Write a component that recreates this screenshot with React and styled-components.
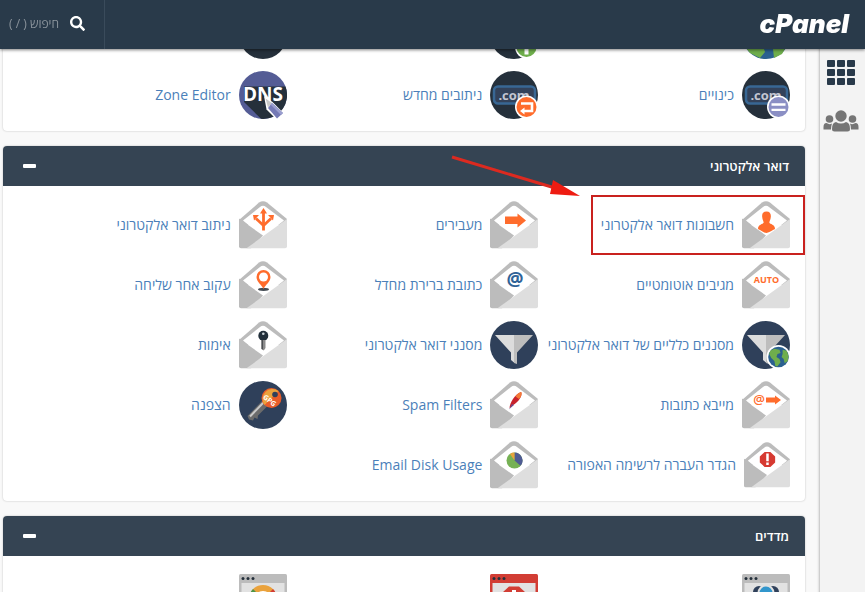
import React from 'react';
import styled, { createGlobalStyle, css } from 'styled-components';
import { FaSearch } from 'react-icons/fa';

const ORANGE = '#ff6c2c';
const NAVY = '#293a4a';

/* ---------- icons ---------- */

const Svg = ({ size = 48, children }) => (
    <svg width={size} height={size} viewBox="0 0 48 48" aria-hidden="true">{children}</svg>
);

const Envelope = ({ size, children }) => (
    <Svg size={size}>
        <path d="M0 19 L20 1.5 Q24 -1 28 1.5 L48 18 V24 H0 Z" fill="#bcbcbc" />
        <path d="M4 19.500 L21 6 Q24 3.500 27 6 L45 19.500 L24 36 Z" fill="#fff" />
        <path d="M0 17.500 L24 34.500 L12 47.300 H2 Q0 47.300 0 45.300 Z" fill="#bcbcbc" />
        <path d="M48 18 V45.300 Q48 47.300 46 47.300 H7.500 Z" fill="#dedede" />
        {children}
    </Svg>
);

const Globe = ({ cx, cy, r }) => (
    <g transform={`translate(${cx} ${cy}) scale(${r / 10})`}>
        <circle r="10" fill="#2b6090" />
        <path d="M-8 -6 L-4 -8 L1 -7 L2 -4 L-1 -3 L-2 0 L1 2 L2 5 L-1 9 L-3 9 L-4 4 L-7 1 L-9 -3 Z" fill="#6fae4c" />
        <path d="M4 -7 L8 -6 L9.800 -1 L9 4 L6 6 L5 2 L3 0 L4 -3 Z" fill="#6fae4c" />
    </g>
);

const AccountsIcon = () => (
    <Envelope>
        <path fill={ORANGE} d="M24.500 10.500 C28 10.500 29.200 13 28.800 16 C28.500 19 27.500 20 27.300 21.500 C28 23.500 33 23 33 28 C30.500 29 27.500 31.500 24.500 32 C21.500 31.500 18.500 29 16 28 C16 23 21 23.500 21.700 21.500 C21.500 20 20.500 19 20.200 16 C19.800 13 21 10.500 24.500 10.500 Z" />
    </Envelope>
);

const ForwardIcon = () => (
    <Envelope>
        <path fill={ORANGE} d="M15 15.500 H27.500 V12.500 L36 19.500 L27.500 26.500 V23 H15 Z" />
    </Envelope>
);

const RoutingIcon = () => (
    <Envelope>
        <g fill="none" stroke={ORANGE} strokeWidth="2.800">
            <path d="M24.500 29.500 V11" />
            <path d="M24.500 24.500 L17 17.500" />
            <path d="M24.500 24.500 L32 17.500" />
        </g>
        <path fill={ORANGE} d="M24.500 7 L28 12.500 H21 Z M14 14 L20 14 L15 19.500 Z M35 14 L29 14 L34 19.500 Z" />
    </Envelope>
);

const IconText = styled.text`
    font-family: 'Open Sans', sans-serif;
    font-weight: ${({ $weight }) => $weight || 700};
    font-size: ${({ $size }) => $size}px;
    text-anchor: middle;
    direction: ltr;
`;

const AutoIcon = () => (
    <Envelope>
        <IconText $size={9} x="24.500" y="22" fill={ORANGE}>AUTO</IconText>
    </Envelope>
);

const DefaultIcon = () => (
    <Envelope>
        <IconText $size={19} x="25" y="25" fill="#2f6397">@</IconText>
    </Envelope>
);

const TrackIcon = () => (
    <Envelope>
        <ellipse cx="24.500" cy="28.300" rx="5.500" ry="1.600" fill="#444c54" />
        <path fill={ORANGE} d="M24.500 9 A7 7 0 0 1 31.500 16 C31.500 21 26 24 24.500 28 C23 24 17.500 21 17.500 16 A7 7 0 0 1 24.500 9 Z" />
        <circle cx="24.500" cy="16" r="4.500" fill="#fff" />
    </Envelope>
);

const FilterIcon = ({ globe }) => (
    <Svg>
        <circle cx="24" cy="24" r="24" fill="#2f405a" />
        <path d="M5 14 H24.500 V42 L21 39 V31.500 Z" fill="#dcdcdc" />
        <path d="M43 14 H24 V42 L27 43 V31.500 Z" fill="#bdbdbd" />
        {globe && (
            <>
                <circle cx="36.500" cy="36" r="12" fill="#fff" />
                <Globe cx={36.5} cy={36} r={10.3} />
            </>
        )}
    </Svg>
);

const AuthIcon = () => (
    <Envelope>
        <circle cx="24.300" cy="14.800" r="5" fill="#222f3b" />
        <circle cx="24.300" cy="12.700" r="1.300" fill="#c9d2d8" />
        <path d="M22.500 19 H26.500 V27 L24.800 29.500 L22.500 28 Z" fill="#8b8b8b" />
        <path d="M22.500 19 H24 V28.500 L22.500 28 Z" fill="#4c4f52" />
    </Envelope>
);

const ImportIcon = () => (
    <Envelope>
        <IconText $size={13} $weight={600} x="17" y="23" fill={ORANGE}>@</IconText>
        <path fill={ORANGE} d="M24 16.500 H33 V14.500 L39 19 L33 23.500 V21.500 H24 Z" />
    </Envelope>
);

const SpamIcon = () => (
    <Envelope>
        <path d="M19.500 27 C20 22 24 14 31 11 C33 14 29 21 22.500 24.500 Z" fill="#c8232c" />
        <path d="M25.500 15.500 C27 13 29 11.500 31.500 11 C32 13.500 31 16 29 18 Z" fill="#f47b36" />
        <path d="M19 28.500 L22 23 L24 24 L20.500 27 Z" fill="#6b4a8b" />
    </Envelope>
);

const KeyIcon = () => (
    <Svg>
        <circle cx="24" cy="24" r="24" fill="#2f405a" />
        <path d="M24 19 L29 24.500 L19 34.500 L18.500 38 L15.500 36.500 L14 39.500 L10 38.500 L8.500 35 Z" fill="#6b6b6b" />
        <path d="M24.500 21.500 L11 35.500" stroke="#c9c9c9" strokeWidth="2" />
        <circle cx="32.500" cy="17" r="10" fill="#e95c29" />
        <path d="M25.500 24 A10 10 0 0 1 39.500 10 Z" fill="#eaa23c" />
        <circle cx="36" cy="13.500" r="2.800" fill="#2f405a" />
        <IconText $size={7} x="31" y="22" fill="#fff" transform="rotate(38 31 19)">GPG</IconText>
    </Svg>
);

const GreylistIcon = () => (
    <Envelope size={46}>
        <path d="M21.500 10.500 H27.500 L32.500 15 V21.500 L27.500 26 H21.500 L16.500 21.500 V15 Z" fill="#d63a31" />
        <path d="M24.500 12 V20 M24.500 21.500 V24" stroke="#fff" strokeWidth="2.600" />
    </Envelope>
);

const DiskIcon = () => (
    <Envelope>
        <circle cx="24.500" cy="19.500" r="8" fill="#76b154" />
        <path d="M24.500 19.500 V11.500 A8 8 0 0 1 30.500 24.800 Z" fill="#4f5b93" />
        <path d="M24.500 19.500 L20 12.900 A8 8 0 0 1 24.500 11.500 Z" fill="#e8a33d" />
    </Envelope>
);

const DarkDisc = ({ children }) => (
    <Svg>
        <circle cx="24" cy="24" r="24" fill="#25303b" />
        {children}
    </Svg>
);

const ComPlate = () => (
    <>
        <rect x="4" y="15.500" width="41" height="17" rx="4" fill="#33425a" stroke="#386794" strokeWidth="2.500" />
        <IconText $size={13} x="24" y="28.500" fill="#c3c6d2">.com</IconText>
    </>
);

const AliasIcon = () => (
    <DarkDisc>
        <ComPlate />
        <circle cx="36.500" cy="36" r="11.500" fill="#fff" />
        <circle cx="36.500" cy="36" r="10" fill="#8b8fc4" />
        <path d="M29.500 33.500 H43.500 M29.500 38.800 H43.500" stroke="#fff" strokeWidth="2.300" />
    </DarkDisc>
);

const RedirectIcon = () => (
    <DarkDisc>
        <ComPlate />
        <circle cx="36.500" cy="36" r="11.500" fill="#fff" />
        <circle cx="36.500" cy="36" r="10" fill={ORANGE} />
        <path d="M31 32.500 H42 V40 H34" fill="none" stroke="#fff" strokeWidth="2.600" />
        <path d="M30 40 L34.500 36.500 V43.500 Z" fill="#fff" />
    </DarkDisc>
);

const DnsIcon = () => (
    <Svg>
        <circle cx="24" cy="24" r="24" fill="#545c95" />
        <path d="M5 15.500 H46.500 A24 24 0 0 1 24 48 L22 47.800 L5 31 Z" fill="#25303b" />
        <IconText $size={19} x="24" y="30" fill="#fff">DNS</IconText>
        <path d="M25 25 L33.500 31 L45.500 43 L38 49 L27.500 38.500 Z" fill="#fff" />
        <path d="M26.500 27.500 L33 32 L29 36.500 Z" fill="#c9c9c9" />
        <path d="M33 32 L44 42 L38 47.500 L29 37 Z" fill="#7479b5" />
        <path d="M33 32 L44 42 L42 44 L31.500 33.500 Z" fill="#9a9ecf" />
    </Svg>
);

const SubdomainIcon = () => (
    <DarkDisc>
        <circle cx="36.500" cy="36" r="11.500" fill="#fff" />
        <circle cx="36.500" cy="36" r="10" fill="#6fae4c" />
        <path d="M36.500 29 L42 36 H38.500 V43.500 H34.500 V36 H31 Z" fill="#fff" />
    </DarkDisc>
);

const WorldIcon = () => (
    <Svg>
        <circle cx="24" cy="24" r="24" fill="#2b6090" />
        <path d="M9 33 L21 35 L23 41 L18 47 L8 42 L4 37 Z M31 38 L44 36 L40 43 L32 47 Z" fill="#6fae4c" />
    </Svg>
);

const BrowserFrame = ({ color = '#bcbcbc', children }) => (
    <Svg>
        <path d="M1.500 3 H46.500 Q48 3 48 4.500 V48 H0 V4.500 Q0 3 1.500 3 Z" fill={color} />
        <rect x="2.500" y="12" width="43" height="36" fill="#e2e2e2" />
        <circle cx="4" cy="7.500" r="1.500" fill="#25303b" />
        <circle cx="9" cy="7.500" r="1.500" fill="#25303b" />
        <circle cx="14" cy="7.500" r="1.500" fill="#25303b" />
        {children}
    </Svg>
);

const VisitorsIcon = () => (
    <BrowserFrame>
        <circle cx="17" cy="21" r="6" fill="#2f405a" />
        <circle cx="31" cy="21" r="6" fill="#2f405a" />
        <circle cx="24" cy="22" r="7.500" fill="#3296cc" stroke="#e2e2e2" strokeWidth="2" />
    </BrowserFrame>
);

const ErrorsIcon = () => (
    <BrowserFrame color="#d23d34">
        <path d="M19 15.500 H29 L36 22 V36 H12 V22 Z" fill="#d23d34" />
        <path d="M24 19 V30" stroke="#fff" strokeWidth="4" />
    </BrowserFrame>
);

const BandwidthIcon = () => (
    <BrowserFrame>
        <circle cx="24" cy="28" r="14" fill="#eaa23c" />
        <path d="M24 28 L14 18 A14 14 0 0 0 10 28 Z" fill="#4d9447" />
        <path d="M24 28 L34 18 A14 14 0 0 1 38 28 Z" fill="#d23d34" />
        <circle cx="24" cy="28" r="8" fill="#fff" />
    </BrowserFrame>
);

const AppsIcon = () => (
    <svg width="28" height="26" viewBox="0 0 28 26" aria-hidden="true">
        {[0, 9, 18].map((y) => [0, 10, 20].map((x) => (
            <rect key={`${x}-${y}`} x={x} y={y} width="8" height="7" rx="1" fill={NAVY} />
        )))}
    </svg>
);

const UsersIcon = () => (
    <svg width="36" height="22" viewBox="0 0 36 22" fill="#757575" aria-hidden="true">
        <circle cx="18" cy="6" r="5.700" />
        <circle cx="6.500" cy="9" r="3.800" />
        <circle cx="29.500" cy="9" r="3.800" />
        <path d="M9 19 Q9 12.500 13 12 Q18 15 23 12 Q27 12.500 27 19 Q27 21.500 24.500 21.500 H11.500 Q9 21.500 9 19 Z" />
        <path d="M.500 19.500 V17 Q.500 13 3.500 13 Q6.500 15 9 13.500 Q8 16 8 19.500 Z" />
        <path d="M35.500 19.500 V17 Q35.500 13 32.500 13 Q29.500 15 27 13.500 Q28 16 28 19.500 Z" />
    </svg>
);

/* ---------- data ---------- */

const domains = [
    { name: 'דומיינים', icon: <WorldIcon />, iconOnly: true },
    { name: 'תת דומיינים', icon: <SubdomainIcon />, iconOnly: true },
    { name: 'דומיינים נוספים', icon: <DarkDisc />, iconOnly: true },
    { name: 'כינויים', icon: <AliasIcon /> },
    { name: 'ניתובים מחדש', icon: <RedirectIcon /> },
    { name: 'Zone Editor', icon: <DnsIcon /> },
];

const email = [
    { name: 'חשבונות דואר אלקטרוני', icon: <AccountsIcon />, marked: true },
    { name: 'מעבירים', icon: <ForwardIcon /> },
    { name: 'ניתוב דואר אלקטרוני', icon: <RoutingIcon /> },
    { name: 'מגיבים אוטומטיים', icon: <AutoIcon /> },
    { name: 'כתובת ברירת מחדל', icon: <DefaultIcon /> },
    { name: 'עקוב אחר שליחה', icon: <TrackIcon /> },
    { name: 'מסננים כלליים של דואר אלקטרוני', icon: <FilterIcon globe /> },
    { name: 'מסנני דואר אלקטרוני', icon: <FilterIcon /> },
    { name: 'אימות', icon: <AuthIcon /> },
    { name: 'מייבא כתובות', icon: <ImportIcon /> },
    { name: 'Spam Filters', icon: <SpamIcon /> },
    { name: 'הצפנה', icon: <KeyIcon /> },
    { name: 'הגדר העברה לרשימה האפורה', icon: <GreylistIcon /> },
    { name: 'Email Disk Usage', icon: <DiskIcon /> },
];

const metrics = [
    { name: 'מבקרים', icon: <VisitorsIcon />, iconOnly: true },
    { name: 'שגיאות', icon: <ErrorsIcon />, iconOnly: true },
    { name: 'רוחב פס', icon: <BandwidthIcon />, iconOnly: true },
];

/* ---------- components ---------- */

function Panel({ title, items }) {
    return (
        <PanelStyled>
            {title && (
                <PanelHeader>
                    <PanelTitle>{title}</PanelTitle>
                    <CollapseButton type="button" aria-label={title} />
                </PanelHeader>
            )}
            <ItemGrid>
                {items.map(({ name, icon, iconOnly, marked }) => (
                    <li key={name}>
                        <ItemLink href="#" aria-label={iconOnly ? name : undefined}>
                            {icon}
                            {!iconOnly && <span>{name}</span>}
                            {marked && (
                                <Mark>
                                    <Arrow viewBox="0 0 130 42" aria-hidden="true">
                                        <path d="M1 2 L104 33" stroke="#dc2a20" strokeWidth="3" />
                                        <path d="M129 41 L102 25 L99 39 Z" fill="#ee1c12" />
                                    </Arrow>
                                </Mark>
                            )}
                        </ItemLink>
                    </li>
                ))}
            </ItemGrid>
        </PanelStyled>
    );
}

function App() {
    return (
        <>
            <GlobalStyle />
            <TopBar>
                <Logo href="#">cPanel</Logo>
                <Search>
                    <FaSearch size={15} aria-hidden="true" />
                    <SearchInput type="text" aria-label="חיפוש" placeholder="חיפוש ( / )" />
                </Search>
            </TopBar>
            <Page>
                <Sidebar>
                    <SideButton type="button" aria-label="כלים"><AppsIcon /></SideButton>
                    <SideButton type="button" aria-label="משתמשים"><UsersIcon /></SideButton>
                </Sidebar>
                <Content>
                    <Panel items={domains} />
                    <Panel title="דואר אלקטרוני" items={email} />
                    <Panel title="מדדים" items={metrics} />
                </Content>
            </Page>
        </>
    );
}

const GlobalStyle = createGlobalStyle`
    * {
        box-sizing: border-box;
    }
    html {
        scrollbar-width: none;
    }
    body {
        margin: 0;
        direction: rtl;
        background: #f9f9f9;
        font-family: 'Open Sans', 'Liberation Sans', sans-serif;
        font-size: 14px;
        line-height: 20px;
    }
`;

const resetButton = css`
    padding: 0;
    border: 0;
    background: none;
    cursor: pointer;
`;

const TopBar = styled.header`
    position: fixed;
    top: 0;
    left: 0;
    right: 0;
    z-index: 10;
    display: flex;
    align-items: stretch;
    justify-content: space-between;
    height: 49px;
    background: ${NAVY};
    box-shadow: 0 1px 3px rgba(0, 0, 0, 0.5);
`;

const Logo = styled.a`
    display: flex;
    align-items: center;
    padding: 0 16px 2px;
    color: #fff;
    font-family: Inter, Roboto, sans-serif;
    font-size: 26px;
    font-style: italic;
    font-weight: 900;
    text-decoration: none;
    direction: ltr;
`;

const Search = styled.label`
    display: flex;
    align-items: center;
    gap: 11px;
    width: 105px;
    padding: 0 19px 3px 8px;
    border-right: 1px solid #3a4b5b;
    color: #fff;

    svg {
        flex: none;
    }
`;

const SearchInput = styled.input`
    flex: 1;
    min-width: 0;
    padding: 0;
    border: 0;
    outline: 0;
    background: none;
    color: #fff;
    font-family: inherit;
    font-size: 12px;

    &::placeholder {
        color: #8b949c;
        opacity: 1;
    }
`;

const Page = styled.div`
    display: flex;
    min-height: 100vh;
`;

const Sidebar = styled.nav`
    display: flex;
    flex: none;
    flex-direction: column;
    align-items: center;
    gap: 24px;
    width: 45px;
    padding: 60px 6px 0 3px;
    background: #f3f3f3;
    box-shadow: 0 0 3px rgba(0, 0, 0, 0.45);
`;

const SideButton = styled.button`
    ${resetButton}
    display: flex;
`;

const Content = styled.main`
    display: flex;
    flex: 1;
    flex-direction: column;
    gap: 15px;
    min-width: 0;
    padding: 0 15px 0 3px;
`;

const PanelStyled = styled.section`
    border-radius: 4px;
    background: #fff;
    box-shadow: 0 0 2px rgba(0, 0, 0, 0.25);

    &:first-child {
        padding-top: 5px;
    }
    &:first-child ul {
        padding-top: 0;
    }
`;

const PanelHeader = styled.div`
    display: flex;
    align-items: center;
    justify-content: space-between;
    height: 40px;
    padding: 0 16px 0 20px;
    border-radius: 4px 4px 0 0;
    background: #354453;
`;

const PanelTitle = styled.h2`
    margin: 0;
    color: #fff;
    font-size: 13px;
    font-weight: 600;
`;

const CollapseButton = styled.button`
    ${resetButton}
    padding: 8px 0;

    &::before {
        content: '';
        display: block;
        width: 13px;
        height: 4px;
        border-radius: 1px;
        background: #fff;
    }
`;

const ItemGrid = styled.ul`
    display: grid;
    grid-template-columns: repeat(3, 1fr);
    margin: 0;
    padding: 9px 15px 6px 32px;
    list-style: none;
`;

const ItemLink = styled.a`
    position: relative;
    display: inline-flex;
    align-items: center;
    gap: 8px;
    height: 60px;
    color: #4b7fb9;
    text-decoration: none;
    white-space: nowrap;

    svg {
        flex: none;
    }
`;

const Mark = styled.i`
    position: absolute;
    inset: 0 -15px 0 -10px;
    border: 2px solid #c9211e;
    pointer-events: none;
`;

const Arrow = styled.svg`
    position: absolute;
    right: 100%;
    bottom: 100%;
    width: 130px;
    height: 42px;
    margin-right: 12px;
`;

export default App;
